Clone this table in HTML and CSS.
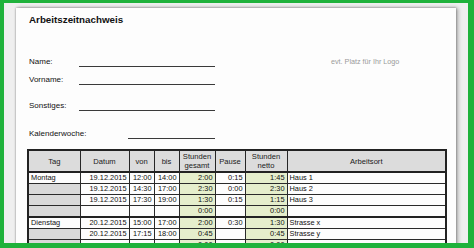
FILE: index.html
```html
<!DOCTYPE html>
<html lang="de">
<head>
<meta charset="utf-8">
<title>Arbeitszeitnachweis</title>
<link rel="stylesheet" href="styles.css">
</head>
<body>
<div class="frame">
  <div class="paper">
    <div class="title">Arbeitszeitnachweis</div>
    <div class="field f1"><span class="label">Name:</span><span class="line"></span><span class="logo">evt. Platz für Ihr Logo</span></div>
    <div class="field f2"><span class="label">Vorname:</span><span class="line"></span></div>
    <div class="field f3"><span class="label">Sonstiges:</span><span class="line"></span></div>
    <div class="field f4"><span class="label wide">Kalenderwoche:</span><span class="line short"></span></div>
    <table class="sheet">
      <colgroup>
        <col class="c-tag"><col class="c-dat"><col class="c-von"><col class="c-bis"><col class="c-ges"><col class="c-pau"><col class="c-net"><col class="c-ort">
      </colgroup>
      <thead>
        <tr><th>Tag</th><th>Datum</th><th>von</th><th>bis</th><th>Stunden<br>gesamt</th><th>Pause</th><th>Stunden<br>netto</th><th>Arbeitsort</th></tr>
      </thead>
      <tbody>
        <tr class="day"><td class="tag">Montag</td><td class="r">19.12.2015</td><td class="r">12:00</td><td class="r">14:00</td><td class="g">2:00</td><td class="r">0:15</td><td class="g">1:45</td><td>Haus 1</td></tr>
        <tr><td class="tag gray"></td><td class="r">19.12.2015</td><td class="r">14:30</td><td class="r">17:00</td><td class="g">2:30</td><td class="r">0:00</td><td class="g">2:30</td><td>Haus 2</td></tr>
        <tr><td class="tag gray"></td><td class="r">19.12.2015</td><td class="r">17:30</td><td class="r">19:00</td><td class="g">1:30</td><td class="r">0:15</td><td class="g">1:15</td><td>Haus 3</td></tr>
        <tr><td class="tag gray"></td><td class="r"></td><td class="r"></td><td class="r"></td><td class="g">0:00</td><td class="r"></td><td class="g">0:00</td><td></td></tr>
        <tr class="day split"><td class="tag">Dienstag</td><td class="r">20.12.2015</td><td class="r">15:00</td><td class="r">17:00</td><td class="g">2:00</td><td class="r">0:30</td><td class="g">1:30</td><td>Strasse x</td></tr>
        <tr><td class="tag gray"></td><td class="r">20.12.2015</td><td class="r">17:15</td><td class="r">18:00</td><td class="g">0:45</td><td class="r"></td><td class="g">0:45</td><td>Strasse y</td></tr>
        <tr><td class="tag gray"></td><td class="r"></td><td class="r"></td><td class="r"></td><td class="g">0:00</td><td class="r"></td><td class="g">0:00</td><td></td></tr>
      </tbody>
    </table>
  </div>
</div>
</body>
</html>
```
FILE: styles.css
```css
html, body {
  margin: 0;
  padding: 0;
  background: #ffffff;
}
body {
  font-family: "Liberation Sans", Arial, sans-serif;
  color: #111111;
}
.frame {
  box-sizing: border-box;
  width: 474px;
  height: 248px;
  border-style: solid;
  border-color: #1fb23b;
  border-width: 3px 6px 5px 4px;
  background: #efefef;
  padding: 5px 12px 0 12px;
  overflow: hidden;
}
.paper {
  background: #fdfdfd;
  height: 300px;
  padding: 6px 0 0 13px;
  box-shadow: 0 0 2px rgba(0,0,0,0.4), 2px 0 4px rgba(0,0,0,0.3);
}
.title {
  font-weight: bold;
  font-size: 9.8px;
  line-height: 12px;
  height: 12px;
}
.field {
  display: flex;
  align-items: flex-start;
  height: 12px;
  font-size: 8px;
  line-height: 12px;
}
.f1 { margin-top: 30px; }
.f2 { margin-top: 6px; }
.f3 { margin-top: 14px; }
.f4 { margin-top: 16px; }
.label {
  width: 50px;
  flex: none;
}
.label.wide { width: 99px; }
.line {
  width: 136px;
  height: 10px;
  border-bottom: 1px solid #3a3a3a;
  flex: none;
}
.line.short { width: 87px; }
.logo {
  margin-left: 116px;
  font-size: 7.2px;
  color: #9a9a9a;
  line-height: 12px;
}
.sheet {
  margin: 9px 0 0 -2px;
  border-collapse: collapse;
  table-layout: fixed;
  width: 418px;
  font-size: 7.4px;
  border: 2px solid #222222;
}
.c-tag { width: 52px; }
.c-dat { width: 49px; }
.c-von { width: 25px; }
.c-bis { width: 25px; }
.c-ges { width: 36px; }
.c-pau { width: 30px; }
.c-net { width: 42px; }
.c-ort { width: 159px; }
.sheet th {
  background: #dcdcdc;
  font-weight: normal;
  font-size: 7.6px;
  line-height: 9px;
  height: 20px;
  padding: 0 1px;
  border: 1px solid #262626;
  border-bottom: 2px solid #222222;
  text-align: center;
  color: #1a1a1a;
}
.sheet td {
  height: 10px;
  line-height: 10px;
  padding: 0 2px;
  border: 1px solid #2a2a2a;
  white-space: nowrap;
  overflow: hidden;
}
.sheet td.r { text-align: right; }
.sheet td.g {
  text-align: right;
  background: #e5eecc;
}
.sheet td.tag { text-align: left; }
.sheet td.gray { background: #d9d9d9; }
.sheet tr.split td { border-top: 2px solid #222222; }
```
